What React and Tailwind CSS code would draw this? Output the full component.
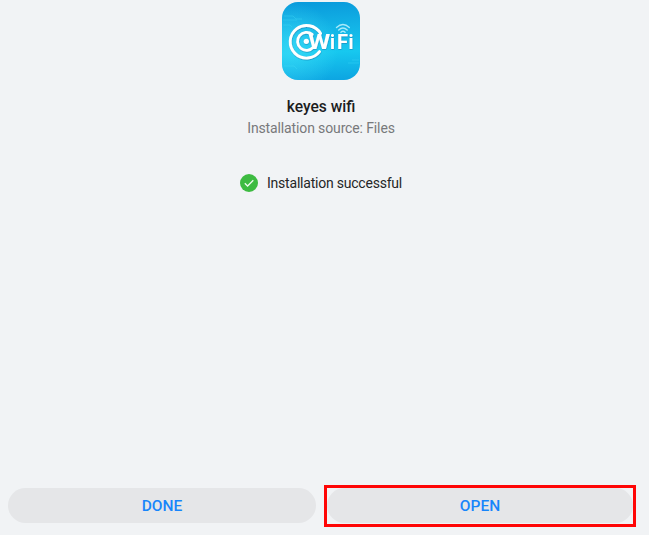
function AppIcon() {
  return (
    <svg className="block h-[78px] w-[78px]" viewBox="0 0 78 78" role="img" aria-label="keyes wifi">
      <defs>
        <linearGradient id="sky" x1="0.45" y1="0" x2="0.5" y2="1">
          <stop offset="0" stopColor="#0a9bdc" />
          <stop offset="0.3" stopColor="#12b1e5" />
          <stop offset="0.65" stopColor="#17c8ef" />
          <stop offset="1" stopColor="#0da6e2" />
        </linearGradient>
        <radialGradient id="glow" cx="0.12" cy="0.6" r="0.6">
          <stop offset="0" stopColor="#45e2fa" stopOpacity="0.6" />
          <stop offset="1" stopColor="#45e2fa" stopOpacity="0" />
        </radialGradient>
        <filter id="shade" x="-20%" y="-20%" width="140%" height="140%">
          <feDropShadow dx="0.3" dy="0.6" stdDeviation="0.7" floodColor="#075f94" floodOpacity="0.6" />
        </filter>
      </defs>
      <rect width="78" height="78" rx="16" fill="url(#sky)" />
      <rect width="78" height="78" rx="16" fill="url(#glow)" />
      <g fill="none" stroke="#43dcf7" strokeWidth="0.6" opacity="0.6">
        <path d="M2 14h9l3 3h6M1 18h14M1 23h7l2 2M66 61h11M70 58h7M2 64h10l3 3" />
      </g>
      <g filter="url(#shade)">
        <path d="M38.6 31.6A16.3 16.3 0 1 0 37.5 49.6" fill="none" stroke="#fff" strokeWidth="2.9" strokeLinecap="round" />
        <path d="M30.2 32.4A9 9 0 1 0 31.4 45.2" fill="none" stroke="#fff" strokeWidth="2.8" strokeLinecap="round" />
        <circle cx="24.3" cy="39.3" r="2.6" fill="#fff" />
        <g fill="#fff" fontFamily="Roboto, sans-serif" fontWeight="700" fontSize="19.5">
          <text x="26.3" y="46.9" textLength="22" lengthAdjust="spacingAndGlyphs">W</text>
          <text x="47.9" y="46.9" textLength="5" lengthAdjust="spacingAndGlyphs">i</text>
          <text x="55" y="46.9" textLength="11" lengthAdjust="spacingAndGlyphs">F</text>
          <text x="66.4" y="46.9" textLength="5" lengthAdjust="spacingAndGlyphs">i</text>
        </g>
      </g>
      <g fill="none" stroke="#a9eafa" strokeWidth="1.4" strokeLinecap="round">
        <path d="M54.5 25.6Q61 19.6 67.3 25.6M56.7 28Q61 23.9 65.2 28M58.9 30.2Q61 28.2 63.1 30.2" />
      </g>
    </svg>
  );
}

function SuccessIcon() {
  return (
    <svg className="block h-[18px] w-[18px]" viewBox="0 0 18 18" aria-hidden="true">
      <circle cx="9" cy="9" r="9" fill="#3dbb41" />
      <path d="m4.8 9.2 2.8 2.8L13.3 6.3" fill="none" stroke="#effbef" strokeWidth="1.3" />
    </svg>
  );
}

export default function App() {
  return (
    <div className="h-[536px] w-[650px] overflow-hidden bg-white font-['Roboto',sans-serif]">
      <div className="flex h-[535px] w-[649px] flex-col bg-[#f1f3f5]">
        <main className="flex w-[642px] grow flex-col items-center pt-[2px]">
          <AppIcon />
          <h1 className="mt-[17px] text-[15.6px] leading-5 font-medium text-[#1c1d1e]">keyes wifi</h1>
          <p className="mt-px text-[14px] leading-5 tracking-[-0.13px] text-[#78797b]">Installation source: Files</p>
          <div className="mt-[35px] flex items-center gap-[9px]">
            <SuccessIcon />
            <span className="text-[14px] leading-5 tracking-[-0.22px] text-[#252627]">Installation successful</span>
          </div>
        </main>
        <footer className="flex items-start gap-[8px] pb-[8px] pl-[8px]">
          <button className="mt-[3px] h-[35px] w-[308px] rounded-full bg-[#e5e6e8] pt-[2px] text-[15.5px] font-medium text-[#1785fb]">DONE</button>
          <div className="h-[42px] w-[312px] border-3 border-[#ff0505] pb-px">
            <button className="h-full w-full rounded-full bg-[#e5e6e8] pt-[2px] text-[15.5px] font-medium text-[#1785fb]">OPEN</button>
          </div>
        </footer>
      </div>
    </div>
  );
}
